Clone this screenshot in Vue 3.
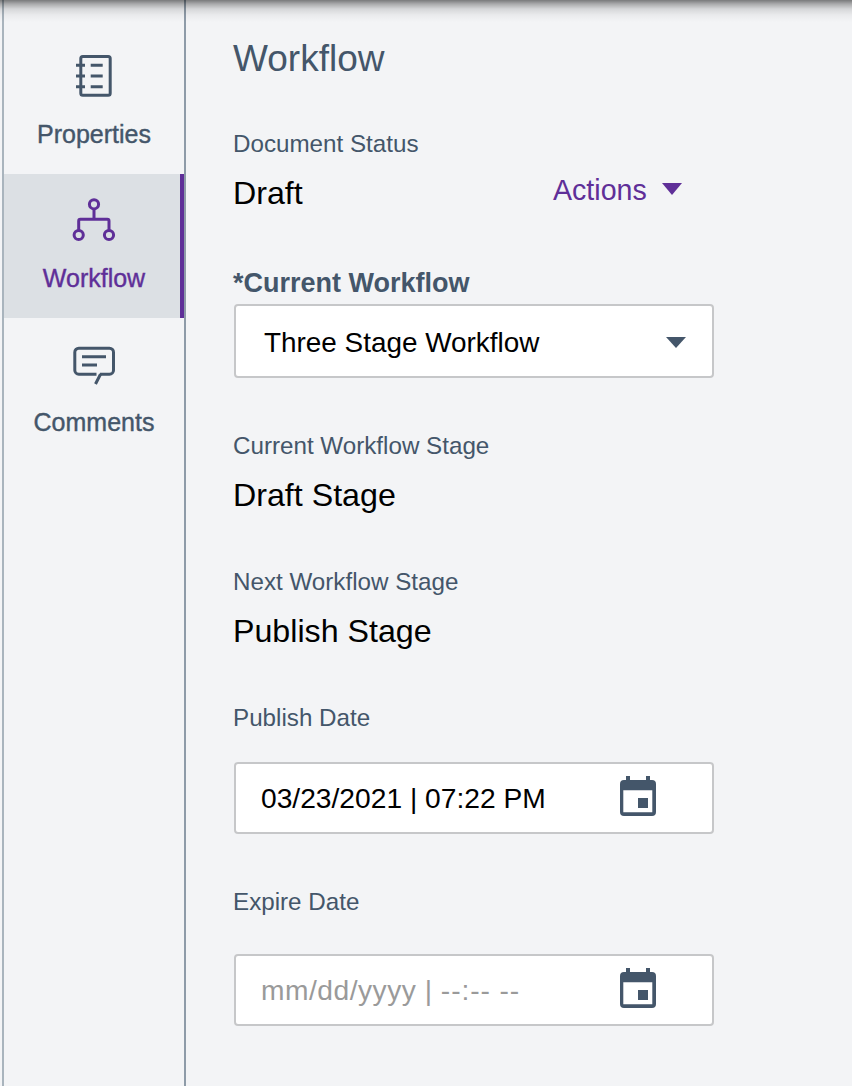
<script setup>
const navItems = [
  { label: 'Properties', icon: 'book' },
  { label: 'Workflow', icon: 'tree', active: true },
  { label: 'Comments', icon: 'chat' },
];
</script>

<template>
  <div class="page">
    <div class="top-shadow"></div>
    <aside class="sidebar">
      <div v-for="item in navItems" :key="item.label" class="nav-item" :class="{ active: item.active }">
        <svg v-if="item.icon === 'book'" class="nav-icon" viewBox="0 0 48 48" width="48" height="48" fill="none" stroke="currentColor" stroke-width="3">
          <rect x="10.800" y="4.500" width="29.400" height="38.700" rx="2" />
          <path d="M6 13.300h9M6 24h9M6 34.700h9M20.700 13.300h12M20.700 24h12M20.700 34.700h12" />
        </svg>
        <svg v-else-if="item.icon === 'tree'" class="nav-icon" viewBox="0 0 48 48" width="48" height="48" fill="none" stroke="currentColor" stroke-width="3">
          <circle cx="24" cy="8.300" r="4.600" />
          <circle cx="8.700" cy="39" r="4.600" />
          <circle cx="39" cy="39" r="4.600" />
          <path d="M24 13v10.300M8.700 34.400V25a1.700 1.700 0 0 1 1.700-1.700h26.900a1.700 1.700 0 0 1 1.700 1.700v9.400" />
        </svg>
        <svg v-else class="nav-icon" viewBox="0 0 48 48" width="48" height="48" fill="none" stroke="currentColor" stroke-width="3">
          <path d="M30 34.200h9.500a4 4 0 0 0 4-4V12.200a4 4 0 0 0-4-4H8.800a4 4 0 0 0-4 4v18a4 4 0 0 0 4 4h17.700" />
          <path d="M30.500 34.200L25.500 44M12 16.700h24M12 25h15" />
        </svg>
        <span class="nav-label">{{ item.label }}</span>
      </div>
    </aside>

    <main class="panel">
      <h1 class="title">Workflow</h1>

      <div class="label status-label">Document Status</div>
      <div class="status-row">
        <span class="value">Draft</span>
        <span class="actions">Actions<span class="caret purple"></span></span>
      </div>

      <div class="current-label">*Current Workflow</div>
      <div class="box select-box">
        <span class="select-text">Three Stage Workflow</span>
        <span class="caret slate"></span>
      </div>

      <div class="label stage-label">Current Workflow Stage</div>
      <div class="value stage-value">Draft Stage</div>

      <div class="label stage-label">Next Workflow Stage</div>
      <div class="value stage-value">Publish Stage</div>

      <div class="label stage-label">Publish Date</div>
      <div class="box date-box publish-box">
        <span class="date-text">03/23/2021 | 07:22 PM</span>
        <svg class="cal" viewBox="0 0 36 40" width="36" height="40" fill="#44566a">
          <path d="M6 0h4v4h16V0h4v4h2a4 4 0 0 1 4 4v28a4 4 0 0 1-4 4H4a4 4 0 0 1-4-4V8a4 4 0 0 1 4-4h2zM3.300 14.300v22h29v-22z" fill-rule="evenodd" />
          <rect x="18" y="22" width="10" height="10" />
        </svg>
      </div>

      <div class="label stage-label">Expire Date</div>
      <div class="box date-box expire-box">
        <span class="date-text placeholder">mm/dd/yyyy | <span class="dashes">--:-- --</span></span>
        <svg class="cal" viewBox="0 0 36 40" width="36" height="40" fill="#44566a">
          <path d="M6 0h4v4h16V0h4v4h2a4 4 0 0 1 4 4v28a4 4 0 0 1-4 4H4a4 4 0 0 1-4-4V8a4 4 0 0 1 4-4h2zM3.300 14.300v22h29v-22z" fill-rule="evenodd" />
          <rect x="18" y="22" width="10" height="10" />
        </svg>
      </div>
    </main>
  </div>
</template>

<style>
html, body {
  margin: 0;
  background: #f3f4f6;
}
</style>

<style scoped>
.page {
  position: relative;
  display: flex;
  width: 852px;
  height: 1086px;
  overflow: hidden;
  background: #f3f4f6;
  font-family: "Liberation Sans", Arial, sans-serif;
  box-sizing: border-box;
  padding-left: 2px;
}

.top-shadow {
  position: absolute;
  top: 0;
  left: 0;
  right: 0;
  height: 22px;
  z-index: 2;
  background: linear-gradient(rgba(0, 0, 0, 0.5) 0, rgba(0, 0, 0, 0.3) 4px, rgba(0, 0, 0, 0.12) 9px, rgba(0, 0, 0, 0.04) 15px, rgba(0, 0, 0, 0) 22px);
}

.sidebar {
  width: 180px;
  padding-top: 30px;
  border-left: 2px solid #a9b4bd;
  border-right: 2px solid #8e9ba8;
  flex-shrink: 0;
}

.nav-item {
  box-sizing: border-box;
  height: 144px;
  display: flex;
  flex-direction: column;
  align-items: center;
  padding-top: 22px;
  color: #44566a;
}

.nav-item.active {
  background: #dce0e4;
  box-shadow: inset -4px 0 0 #5f2f98;
  color: #5f2f98;
}

.nav-icon {
  display: block;
}

.nav-label {
  margin-top: 19px;
  font-size: 25px;
  line-height: 30px;
  -webkit-text-stroke: 0.4px currentColor;
}

.panel {
  flex: 1;
  padding: 38px 0 0 47px;
}

.title {
  margin: 0;
  font-size: 37px;
  line-height: 42px;
  font-weight: 400;
  color: #44566a;
}

.label {
  font-size: 24.200px;
  line-height: 30px;
  color: #44566a;
}

.status-label {
  margin-top: 49px;
}

.status-row {
  position: relative;
  width: 480px;
  height: 46px;
  margin-top: 11px;
  display: flex;
  align-items: center;
}

.value {
  font-size: 32.200px;
  line-height: 38px;
  color: #000;
}

.actions {
  position: absolute;
  left: 320px;
  top: 3px;
  font-size: 28.600px;
  line-height: 34px;
  color: #5f2f98;
  display: flex;
  align-items: center;
}

.caret {
  display: inline-block;
  width: 0;
  height: 0;
}

.caret.purple {
  border-left: 10.500px solid transparent;
  border-right: 10.500px solid transparent;
  border-top: 12.500px solid #5f2f98;
  margin-left: 15px;
  margin-top: -2px;
}

.caret.slate {
  border-left: 10px solid transparent;
  border-right: 10px solid transparent;
  border-top: 11px solid #44566a;
  margin-right: 26px;
}

.current-label {
  margin-top: 50px;
  font-size: 27px;
  line-height: 34px;
  font-weight: 700;
  color: #44566a;
}

.box {
  box-sizing: border-box;
  width: 480px;
  margin-left: 1px;
  background: #fff;
  border: 2px solid #c6c7c9;
  border-radius: 4px;
  display: flex;
  align-items: center;
  justify-content: space-between;
}

.select-box {
  height: 74px;
  margin-top: 4px;
  padding: 3px 0 0 28px;
}

.select-text {
  font-size: 27.900px;
  color: #000;
}

.stage-label {
  margin-top: 53px;
}

.stage-value {
  margin-top: 15px;
}

.date-box {
  height: 72px;
  padding-left: 25px;
}

.publish-box {
  margin-top: 29px;
}

.expire-box {
  margin-top: 37px;
}

.date-text {
  font-size: 28.200px;
  color: #000;
}

.date-text.placeholder {
  color: #9a9a9a;
  letter-spacing: 0.5px;
}

.dashes {
  letter-spacing: 0.9px;
}

.cal {
  margin: 0 56px 4px 0;
}
</style>
